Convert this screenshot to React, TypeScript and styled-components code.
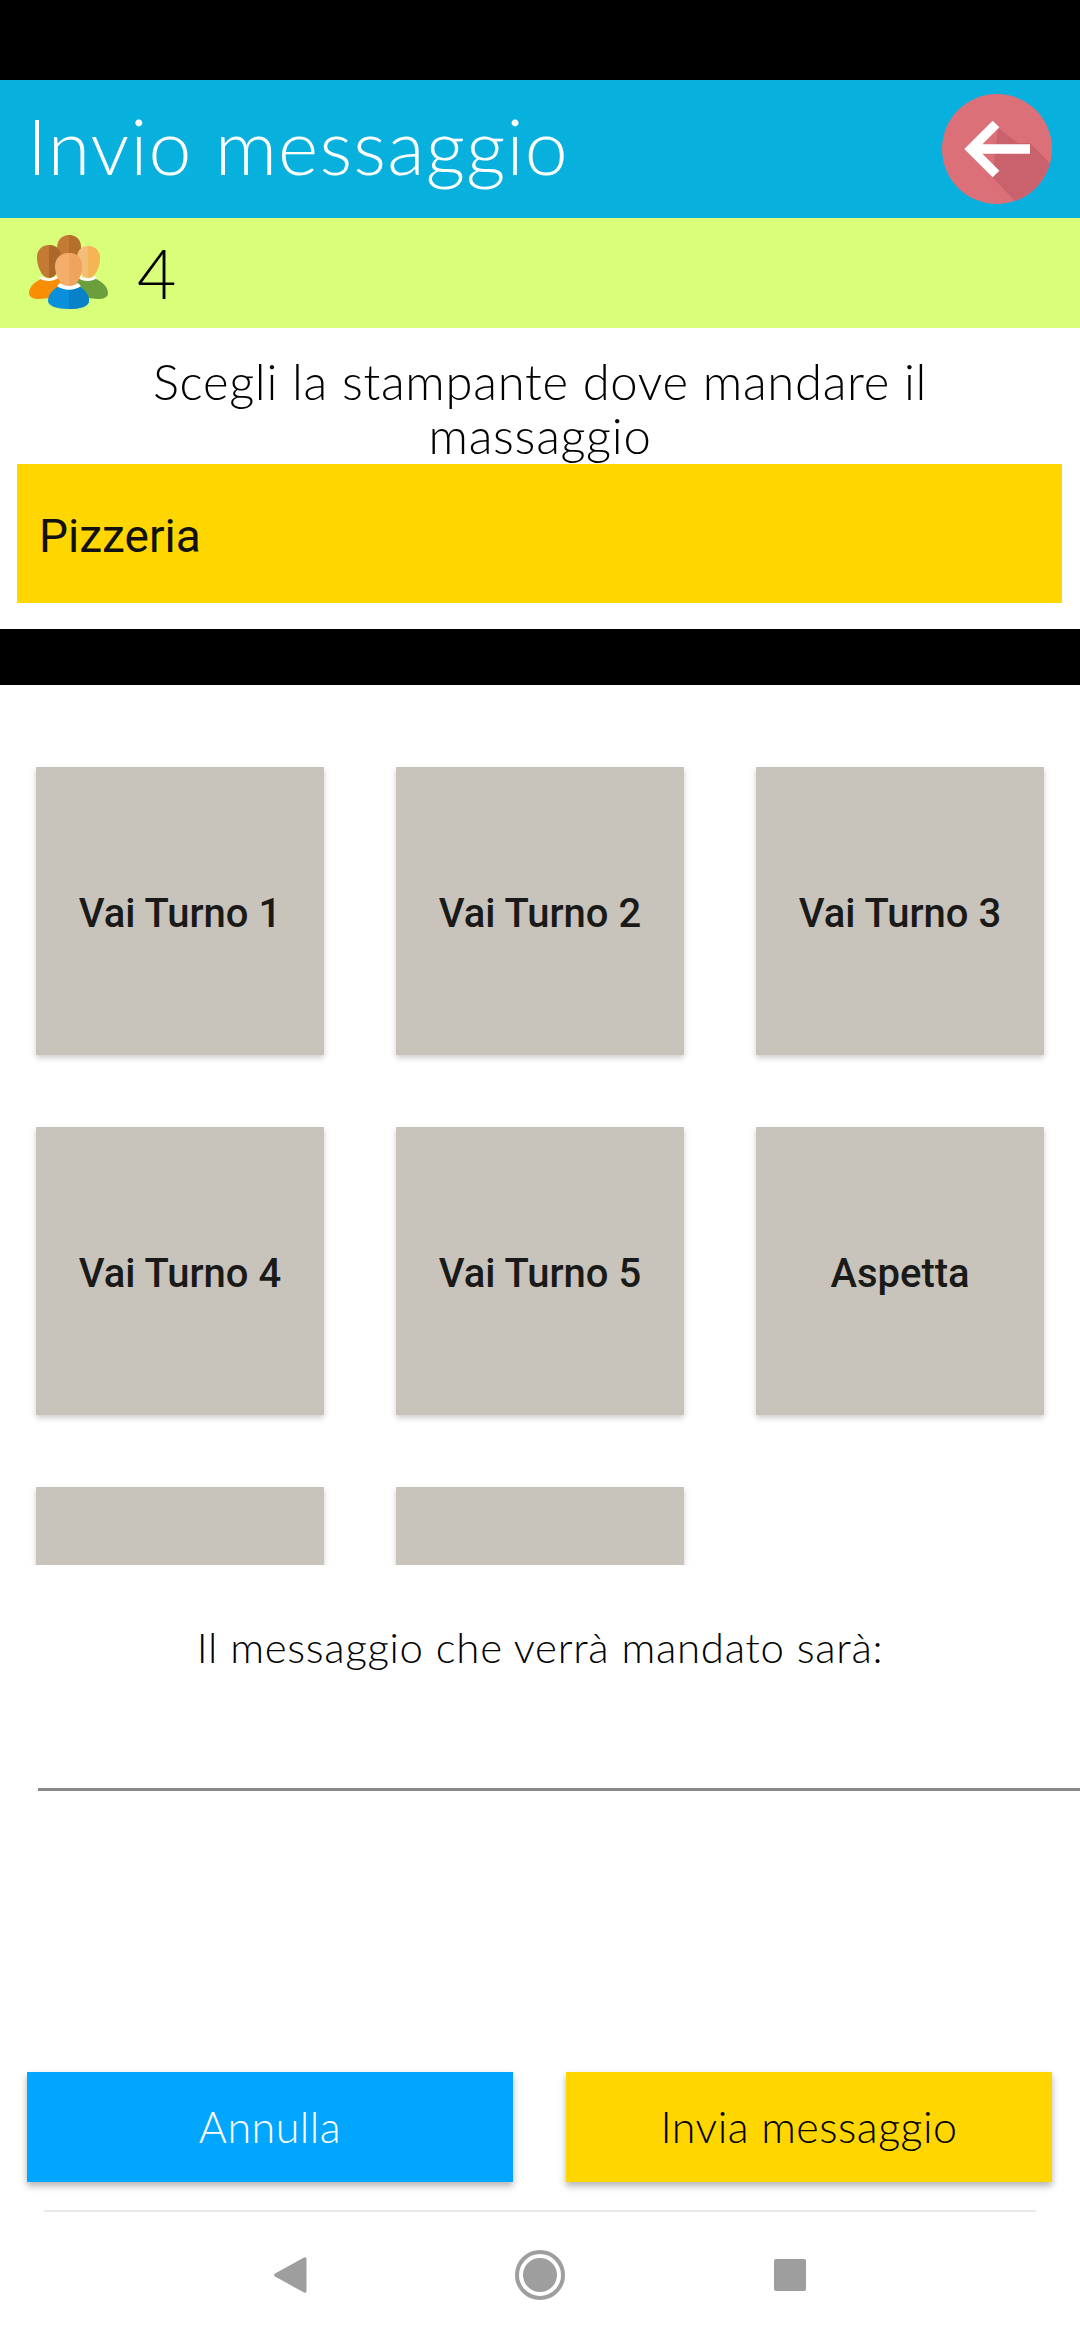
import React from "react";
import styled, { createGlobalStyle } from "styled-components";

const Global = createGlobalStyle`
  html, body { margin: 0; padding: 0; background: #fff; }
  * { box-sizing: border-box; }
`;

const display = `"Lato", "Inter", sans-serif`;

const Page = styled.div`
  width: 1080px;
  height: 2340px;
  display: flex;
  flex-direction: column;
  overflow: hidden;
  background: #fff;
`;
const StatusBar = styled.div`
  height: 80px;
  background: #000;
`;
const Header = styled.header`
  height: 138px;
  background: #08b0de;
  display: flex;
  align-items: center;
  justify-content: space-between;
  padding: 0 28px 0 27px;
`;
const Title = styled.h1`
  margin: 0;
  padding-bottom: 8px;
  font: 300 77px/1 ${display};
  letter-spacing: 1.2px;
  color: #fff;
`;
const CountBar = styled.div`
  height: 110px;
  background: #d9ff7a;
  display: flex;
  align-items: center;
  gap: 28px;
  padding: 0 0 0 29px;
`;
const Count = styled.span`
  font: 300 68px/1 ${display};
  color: #000;
`;
const Prompt = styled.p`
  margin: 26px 100px 2px;
  font: 300 49px/54px ${display};
  letter-spacing: 0.7px;
  text-align: center;
  color: #000;
`;
const Printer = styled.div`
  height: 139px;
  margin: 0 18px 0 17px;
  padding: 4px 0 0 22px;
  display: flex;
  align-items: center;
  background: #ffd600;
  font: 400 46px/1 "Roboto", sans-serif;
  color: #111;
`;
const Band = styled.div`
  height: 56px;
  margin-top: 26px;
  background: #000;
`;
const GridClip = styled.div`
  height: 880px;
  overflow: hidden;
  padding: 82px 0 0 36px;
`;
const Grid = styled.div`
  display: grid;
  grid-template-columns: repeat(3, 288px);
  grid-auto-rows: 288px;
  gap: 72px;
`;
const Card = styled.button`
  border: 0;
  padding: 5px 0 0;
  background: #c8c4bc;
  box-shadow: 0 3px 6px rgba(0, 0, 0, 0.2);
  font: 500 40px/1 "Roboto", sans-serif;
  color: #1a1a18;
`;
const PreviewLabel = styled.p`
  margin: 55px 0 0;
  font: 300 42px/54px ${display};
  letter-spacing: 0.7px;
  text-align: center;
  color: #000;
`;
const Field = styled.div`
  height: 3px;
  margin: 114px 0 0 38px;
  background: #888;
`;
const Actions = styled.div`
  margin-top: auto;
  padding: 0 28px 0 27px;
  display: flex;
  justify-content: space-between;
`;
const ActionButton = styled.button<{ $primary?: boolean }>`
  width: 486px;
  height: 110px;
  border: 0;
  padding: 0 0 2px;
  background: ${(p) => (p.$primary ? "#ffd600" : "#03a6ff")};
  color: ${(p) => (p.$primary ? "#000" : "#fff")};
  box-shadow: 0 4px 7px rgba(0, 0, 0, 0.3);
  font: 300 43px/1 ${display};
  letter-spacing: 0.5px;
`;
const NavBar = styled.nav`
  margin: 28px 44px 0;
  height: 130px;
  border-top: 2px solid #e8e8e8;
  display: grid;
  grid-template-columns: repeat(3, 250px);
  grid-template-rows: 50px;
  justify-content: center;
  justify-items: center;
  align-items: center;
  padding-top: 38px;
`;
const NavIcon = styled.svg`
  display: block;
  fill: #9e9e9e;
`;
const PeopleSvg = styled.svg`
  display: block;
  margin-bottom: 3px;
`;

const PeopleIcon = () => (
  <PeopleSvg width="80" height="74" viewBox="0 0 80 74">
    <path d="M28 13C28 5 33 0 40 0s12 5 12 13-5 20-12 20-12-12-12-20z" fill="#c47a35" />
    <path d="M40 0c7 0 12 5 12 13s-5 20-12 20z" fill="#b56e2c" />
    <path d="M0 58c0-7 7-12 14-15l6 1 12-1 3 19-25 2C4 64 0 62 0 58z" fill="#f98e05" />
    <path d="M20 10c7 0 12 5 12 12 0 10-5 21-12 21S8 32 8 22c0-7 5-12 12-12z" fill="#c47a35" />
    <path d="M20 10c7 0 12 5 12 12 0 10-5 21-12 21z" fill="#ab682b" />
    <path d="M79 58c0-7-7-12-14-15l-6 1-12-1 1 19 21 2c6 0 10-2 10-6z" fill="#6b9f3d" />
    <path d="M59 11c7 0 12 5 12 12 0 9-5 20-12 20S48 32 48 23c0-7 4-12 11-12z" fill="#f2bd78" />
    <path d="M59 11c7 0 12 5 12 12 0 9-5 20-12 20z" fill="#f5b455" />
    <path d="M12 41c4 3 11 3 15 0l2 2c-5 4-14 4-19 0zM51 41c4 3 11 3 15 0l2 2c-5 4-14 4-19 0z" fill="#fff" />
    <path d="M19 66c0-8 7-13 13-16h15c7 3 13 8 13 16 0 5-8 8-20 8s-21-3-21-8z" fill="#0a90da" />
    <path d="M40 50h7c7 3 13 8 13 16 0 5-8 8-20 8z" fill="#0782c9" />
    <path d="M40 18c8 0 13 5 13 13 0 10-6 22-13 22s-14-12-14-22c0-8 6-13 14-13z" fill="#f4ad6b" />
    <path d="M40 18c8 0 13 5 13 13 0 10-6 22-13 22z" fill="#f0a35c" />
    <path d="M31 48c5 4 13 4 18 0l3 3c-7 5-17 5-24 0z" fill="#fff" />
  </PeopleSvg>
);

const BackIcon = () => (
  <svg width="110" height="110" viewBox="0 0 110 110">
    <circle cx="55" cy="55" r="55" fill="#dc7079" />
    <path d="M56 34 L76 49 L88 49 L108 69 A55 55 0 0 1 73 107 L50 83 z" fill="#c9626c" />
    <path d="M54 30 L29 55 L54 80 M29 55 H88" fill="none" stroke="#fff" strokeWidth="9.500" />
  </svg>
);

const actions = ["Vai Turno 1", "Vai Turno 2", "Vai Turno 3", "Vai Turno 4", "Vai Turno 5", "Aspetta", "", ""];

export default function App() {
  return (
    <Page>
      <Global />
      <StatusBar />
      <Header>
        <Title>Invio messaggio</Title>
        <BackIcon />
      </Header>
      <CountBar>
        <PeopleIcon />
        <Count>4</Count>
      </CountBar>
      <Prompt>Scegli la stampante dove mandare il massaggio</Prompt>
      <Printer>Pizzeria</Printer>
      <Band />
      <GridClip>
        <Grid>
          {actions.map((a, i) => (
            <Card key={i}>{a}</Card>
          ))}
        </Grid>
      </GridClip>
      <PreviewLabel>Il messaggio che verrà mandato sarà:</PreviewLabel>
      <Field />
      <Actions>
        <ActionButton>Annulla</ActionButton>
        <ActionButton $primary>Invia messaggio</ActionButton>
      </Actions>
      <NavBar>
        <NavIcon width="34" height="38" viewBox="0 0 34 38">
          <path d="M31 1.500c1.500-.8 2.500 0 2.500 1.500v32c0 1.500-1 2.300-2.500 1.500L2 20.500c-1.300-.8-1.300-2.200 0-3z" />
        </NavIcon>
        <NavIcon width="50" height="50" viewBox="0 0 50 50">
          <circle cx="25" cy="25" r="23" fill="none" stroke="#9e9e9e" strokeWidth="4" />
          <circle cx="25" cy="25" r="17" />
        </NavIcon>
        <NavIcon width="34" height="34" viewBox="0 0 34 34">
          <rect x="1" y="1" width="32" height="32" rx="2" />
        </NavIcon>
      </NavBar>
    </Page>
  );
}
